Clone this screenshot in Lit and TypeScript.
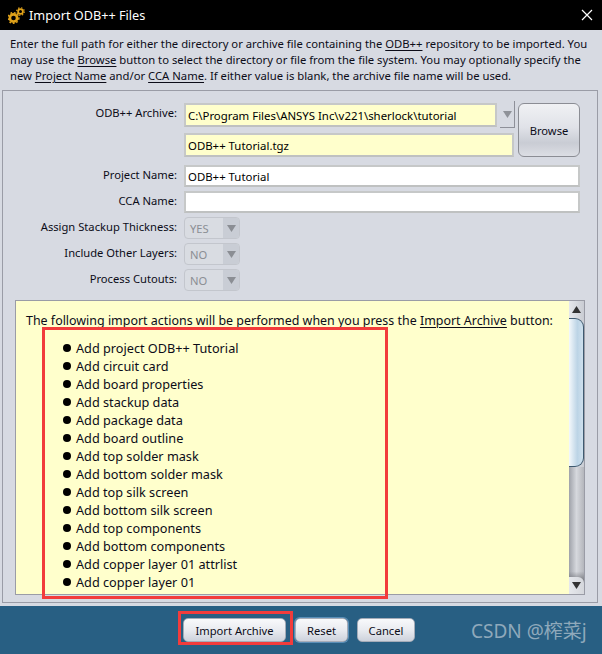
import { LitElement, html, css } from "lit";
import { customElement } from "lit/decorators.js";

const ITEMS = [
  "Add project ODB++ Tutorial", "Add circuit card", "Add board properties", "Add stackup data",
  "Add package data", "Add board outline", "Add top solder mask", "Add bottom solder mask",
  "Add top silk screen", "Add bottom silk screen", "Add top components", "Add bottom components",
  "Add copper layer 01 attrlist", "Add copper layer 01",
];

@customElement("app-root")
export class AppRoot extends LitElement {
  static styles = css`
    :host { display: block; width: 602px; height: 654px; position: relative; overflow: hidden; background: #d7dae2;
      font-family: "Noto Sans", sans-serif; font-size: 11.2px; color: #0c0c18; }
    * { box-sizing: border-box; }
    .title { height: 30px; background: #000; color: #fff; display: flex; align-items: center; padding: 0 8px; gap: 4px; font-size: 12.7px; }
    .title .t { flex: 1; }
    .desc { height: 60px; padding: 6px 10px 0; line-height: 16px; white-space: nowrap; font-size: 11.27px; }
    u { text-underline-offset: 2px; }
    .panel { margin: 0 4px 0 2px; height: 513px; border: 1px solid #9a9ca6; padding: 0 0 0 12px; display: flex; flex-direction: column; }
    .form { display: grid; grid-template-columns: 164px 1fr; column-gap: 5px; padding: 12px 17px 0 0; height: 209px; grid-auto-rows: min-content; }
    .lab { text-align: right; white-space: nowrap; line-height: 16px; padding-right: 2px; }
    .archive { display: grid; grid-template-columns: 313px 18px 65px; grid-template-rows: 24px 24px; row-gap: 6px; margin-bottom: 8px; }
    .lab.a { padding-top: 2px; }
    .in { border: 2px solid #c6c8c8; border-bottom-color: #bfc1c1; background: #fff; padding: 0 2px; display: flex; align-items: center; white-space: nowrap; color: #000; font-size: 11.4px; }
    .yl { background: #ffffcc; }
    .arrow { display: flex; align-items: center; justify-content: center; height: 27px; margin: -2px 0 0 3px; border-right: 1px solid #8e9099; border-bottom: 1px solid #8e9099; }
    .browse { grid-row: 1 / 3; grid-column: 3; margin-left: 3px; width: 62px; height: 54px; border: 1px solid #8b8d94; border-radius: 6px; display: flex; align-items: center; justify-content: center;
      background: linear-gradient(#f0f1f4, #e0e2e8 45%, #c9ccd4 75%, #dcdee4); }
    .second { grid-column: 1 / 3; width: 330px; }
    .text { height: 22px; margin-bottom: 4px; }
    .lab.s { line-height: 20px; }
    .sel { width: 56px; height: 22px; margin-bottom: 4px; border: 1px solid #c3c6cd; border-radius: 4px; display: flex; background: #d9dce2; color: #8b8e94; }
    .sel .v { flex: 1; padding-left: 5px; line-height: 22px; }
    .sel .d { width: 16px; background: #c9cdd5; display: flex; align-items: center; justify-content: center; border-radius: 0 3px 3px 0; }
    .box { height: 295px; width: 570px; border: 1px solid #9a9ca6; display: flex; overflow: hidden; }
    .content { flex: 1; background: #ffffcc; padding: 11px 10px 0; overflow: hidden; font-size: 12.45px; }
    .content p { margin: 0; line-height: 18px; white-space: nowrap; }
    ul { list-style: none; margin: 9px 0 0; padding: 0 0 0 37px; }
    li { height: 18px; line-height: 18px; display: flex; align-items: center; gap: 5px; white-space: nowrap; font-size: 12.7px; }
    li::before { content: ""; width: 8px; height: 8px; border-radius: 50%; background: #000; }
    .sb { width: 15px; background: linear-gradient(90deg, #e6e8ec, #c9ccd3); display: flex; flex-direction: column; align-items: center; }
    .sb .up, .sb .dn { height: 17px; width: 15px; display: flex; align-items: center; justify-content: center; flex: none; }
    .sb .dn { background: linear-gradient(90deg, #e6e8ec, #d5d7dc); border-radius: 0 6px 0 0; margin-top: -6px; position: relative; }
    .thumb { width: 15px; height: 149px; flex: none; border: 1px solid #3f5a70; border-left: none; border-radius: 0 9px 9px 0; background: linear-gradient(90deg, #f4f8fb, #bcd4e6 60%, #cfe1ee); }
    .sb .sp { flex: 1; width: 15px; background: linear-gradient(transparent 90%, #6d6f75), linear-gradient(90deg, #9fa2a9, #d6d8dd 50%, #b4b6bc); }
    .footer { position: absolute; left: 0; right: 0; top: 606px; height: 48px; background: #285f83; display: flex; justify-content: center; gap: 9px; padding: 12px 4px 0 0; }
    .btn { height: 24px; border: 1px solid #a5acb8; border-radius: 5px; display: flex; align-items: center; justify-content: center; white-space: nowrap;
      background: linear-gradient(#f8f9fb, #e9ebf0 50%, #cdd2dc); }
    .imp { width: 103px; }
    .rst { width: 53px; box-shadow: 0 0 0 1px #5a8fb8; }
    .cnc { width: 58px; }
    .red { position: absolute; border: 3px solid #f23c3c; pointer-events: none; }
    .r1 { left: 42px; top: 327px; width: 346px; height: 272px; }
    .r2 { left: 178px; top: 611px; width: 115px; height: 34px; }
    .mark { position: absolute; left: 471px; top: 619px; font-size: 19px; line-height: 24px; color: #8fa9bb; white-space: nowrap; font-family: "Noto Sans", "Noto Sans CJK SC", sans-serif; }
  `;

  render() {
    const tri = (c: string, up = false) => html`<svg width="9" height="7" viewBox="0 0 9 7"><path d=${up ? "M4.5 0L9 7H0Z" : "M0 0H9L4.5 7Z"} fill=${c}/></svg>`;
    return html`
      <div class="title">
        <svg width="17" height="17" viewBox="0 0 17 17" fill="none">
          <circle cx="5.5" cy="11" r="3.6" stroke="#e0a21a" stroke-width="2.6"/>
          <circle cx="5.5" cy="11" r="5.4" stroke="#e0a21a" stroke-width="1.4" stroke-dasharray="1.8 1.8"/>
          <circle cx="12.5" cy="4.5" r="2.4" stroke="#e0a21a" stroke-width="1.8"/>
          <circle cx="12.5" cy="4.5" r="3.8" stroke="#e0a21a" stroke-width="1.2" stroke-dasharray="1.4 1.6"/>
        </svg>
        <span class="t">Import ODB++ Files</span>
        <svg width="12" height="12" viewBox="0 0 12 12" style="margin-right:1px"><path d="M1 1L11 11M11 1L1 11" stroke="#fff" stroke-width="1.2"/></svg>
      </div>
      <div class="desc">
        Enter the full path for either the directory or archive file containing the <u>ODB++</u> repository to be imported. You<br>
        may use the <u>Browse</u> button to select the directory or file from the file system. You may optionally specify the<br>
        new <u>Project Name</u> and/or <u>CCA Name</u>. If either value is blank, the archive file name will be used.
      </div>
      <div class="panel">
        <div class="form">
          <div class="lab a">ODB++ Archive:</div>
          <div class="archive">
            <div class="in yl">C:\\Program Files\\ANSYS Inc\\v221\\sherlock\\tutorial</div>
            <div class="arrow">${tri("#8f9299")}</div>
            <div class="browse">Browse</div>
            <div class="in yl second">ODB++ Tutorial.tgz</div>
          </div>
          <div class="lab s">Project Name:</div><div class="in text">ODB++ Tutorial</div>
          <div class="lab s">CCA Name:</div><div class="in text"></div>
          <div class="lab s">Assign Stackup Thickness:</div>
          <div class="sel"><span class="v">YES</span><span class="d">${tri("#8b8e94")}</span></div>
          <div class="lab s">Include Other Layers:</div>
          <div class="sel"><span class="v">NO</span><span class="d">${tri("#8b8e94")}</span></div>
          <div class="lab s">Process Cutouts:</div>
          <div class="sel"><span class="v">NO</span><span class="d">${tri("#8b8e94")}</span></div>
        </div>
        <div class="box">
          <div class="content">
            <p>The following import actions will be performed when you press the <u>Import Archive</u> button:</p>
            <ul>${ITEMS.map((i) => html`<li>${i}</li>`)}</ul>
          </div>
          <div class="sb">
            <div class="up">${tri("#333", true)}</div>
            <div class="thumb"></div>
            <div class="sp"></div>
            <div class="dn">${tri("#333")}</div>
          </div>
        </div>
      </div>
      <div class="footer">
        <div class="btn imp">Import Archive</div>
        <div class="btn rst">Reset</div>
        <div class="btn cnc">Cancel</div>
      </div>
      <div class="red r1"></div>
      <div class="red r2"></div>
      <div class="mark">CSDN @榨菜j</div>
    `;
  }
}
